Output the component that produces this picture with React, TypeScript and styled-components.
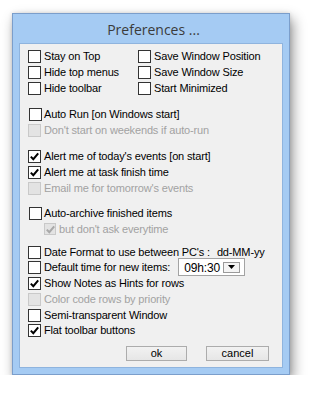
import React from "react";
import styled, { createGlobalStyle } from "styled-components";

const GlobalStyle = createGlobalStyle`
  html, body { margin: 0; padding: 0; background: #ffffff; }
  body { font-family: "Liberation Sans", Arial, sans-serif; font-size: 11px; letter-spacing: -0.15px; color: #000; }
`;

const Window = styled.div`
  box-sizing: border-box;
  margin: 13px 0 0 12px;
  width: 278px;
  height: 362px;
  border: 1px solid #7b9ecb;
  background: #a5cbf3;
  box-shadow: 3px 6px 12px rgba(0, 0, 0, 0.42), 0 0 4px rgba(0, 0, 0, 0.12);
  padding: 0 6px 6px 6px;
  display: flex;
  flex-direction: column;
`;

const TitleBar = styled.div`
  height: 28px;
  display: flex;
  align-items: center;
  justify-content: center;
  font-family: "Open Sans", "Noto Sans", sans-serif;
  font-size: 14px;
  letter-spacing: 0;
  color: #3b3b3b;
  padding-left: 5px;
  padding-top: 1px;
`;

const Panel = styled.div`
  flex: 1;
  background: #f0f0f0;
  border: 1px solid #8fb4de;
  padding: 5px 8px 6px 8px;
  display: flex;
  flex-direction: column;
`;

const Group = styled.div<{ $mt: number }>`
  margin-top: ${(p) => p.$mt}px;
  display: flex;
  flex-direction: column;
`;

const TwoCol = styled.div`
  display: grid;
  grid-template-columns: 110px auto;
  grid-auto-rows: 16px;
`;

const Row = styled.div<{ $h?: number; $indent?: number }>`
  height: ${(p) => p.$h ?? 16}px;
  display: flex;
  align-items: flex-start;
  padding-left: ${(p) => p.$indent ?? 0}px;
  white-space: nowrap;
`;

const Box = styled.span<{ $disabled?: boolean; $small?: boolean; $shift?: number }>`
  box-sizing: border-box;
  width: ${(p) => (p.$small ? 12 : 13)}px;
  height: ${(p) => (p.$small ? 12 : 13)}px;
  margin-top: 1px;
  margin-left: ${(p) => p.$shift ?? 0}px;
  margin-right: ${(p) => 3 - (p.$shift ?? 0)}px;
  border: 1px solid ${(p) => (p.$disabled ? "#c9c9c9" : "#333333")};
  background: ${(p) => (p.$disabled ? "#e3e3e3" : "#ffffff")};
  display: flex;
  align-items: center;
  justify-content: center;
  flex: none;
`;

const Label = styled.span<{ $disabled?: boolean }>`
  line-height: 15px;
  color: ${(p) => (p.$disabled ? "#a2a2a2" : "#000000")};
`;

const Value = styled.span`
  margin-left: 7px;
  line-height: 15px;
`;

const Combo = styled.div`
  box-sizing: border-box;
  margin-left: 8px;
  margin-top: -2px;
  width: 67px;
  height: 18px;
  border: 1px solid #a3a3a3;
  background: #ffffff;
  display: flex;
  align-items: center;
  padding-left: 5px;
`;

const ComboText = styled.span`
  flex: 1;
  font-size: 12px;
  line-height: 16px;
  padding-top: 2px;
`;

const ComboButton = styled.span`
  box-sizing: border-box;
  width: 17px;
  height: 11px;
  margin-right: 4px;
  border: 1px solid #9a9a9a;
  background: #f4f4f4;
  display: flex;
  align-items: center;
  justify-content: center;
`;

const ButtonRow = styled.div`
  margin-top: 7px;
  margin-right: 5px;
  display: flex;
  justify-content: flex-end;
  gap: 19px;
`;

const Button = styled.button<{ $w: number }>`
  box-sizing: border-box;
  width: ${(p) => p.$w}px;
  height: 15px;
  padding: 0;
  border: 1px solid #acacac;
  background: linear-gradient(#f2f2f2, #e6e6e6);
  font-family: "Liberation Sans", Arial, sans-serif;
  font-size: 11px;
  line-height: 13px;
  color: #000;
`;

const Check = ({ color }: { color: string }) => (
  <svg width="9" height="9" viewBox="0 0 9 9">
    <path d="M0.8 4.6 L3.3 7.2 L8.2 1.3" fill="none" stroke={color} strokeWidth="2" />
  </svg>
);

type CBProps = {
  label: React.ReactNode;
  checked?: boolean;
  disabled?: boolean;
  small?: boolean;
  shift?: number;
};

const CheckItem = ({ label, checked, disabled, small, shift }: CBProps) => (
  <>
    <Box $disabled={disabled} $small={small} $shift={shift}>
      {checked && <Check color={disabled ? "#a8a8a8" : "#000"} />}
    </Box>
    <Label $disabled={disabled}>{label}</Label>
  </>
);

export default function App() {
  return (
    <>
      <GlobalStyle />
      <Window>
        <TitleBar>Preferences ...</TitleBar>
        <Panel>
          <TwoCol>
            <Row><CheckItem label="Stay on Top" /></Row>
            <Row><CheckItem label="Save Window Position" /></Row>
            <Row><CheckItem label="Hide top menus" /></Row>
            <Row><CheckItem label="Save Window Size" /></Row>
            <Row><CheckItem label="Hide toolbar" /></Row>
            <Row><CheckItem label="Start Minimized" /></Row>
          </TwoCol>
          <Group $mt={10}>
            <Row><CheckItem label="Auto Run [on Windows start]" shift={1} /></Row>
            <Row><CheckItem label="Don't start on weekends if auto-run" disabled /></Row>
          </Group>
          <Group $mt={10}>
            <Row><CheckItem label="Alert me of today's events [on start]" checked /></Row>
            <Row><CheckItem label="Alert me at task finish time" checked /></Row>
            <Row><CheckItem label="Email me for tomorrow's events" disabled /></Row>
          </Group>
          <Group $mt={9}>
            <Row><CheckItem label="Auto-archive finished items" shift={1} /></Row>
            <Row $h={13} $indent={16}>
              <CheckItem label="but don't ask everytime" checked disabled small />
            </Row>
          </Group>
          <Group $mt={10}>
            <Row $h={15}>
              <CheckItem label="Date Format to use between PC's :" />
              <Value>dd-MM-yy</Value>
            </Row>
            <Row>
              <CheckItem label="Default time for new items:" />
              <Combo>
                <ComboText>09h:30</ComboText>
                <ComboButton>
                  <svg width="7" height="4" viewBox="0 0 7 4">
                    <path d="M0 0 H7 L3.5 4 Z" fill="#000" />
                  </svg>
                </ComboButton>
              </Combo>
            </Row>
            <Row><CheckItem label="Show Notes as Hints for rows" checked /></Row>
            <Row><CheckItem label="Color code rows by priority" disabled /></Row>
            <Row $h={15}><CheckItem label="Semi-transparent Window" /></Row>
            <Row><CheckItem label="Flat toolbar buttons" checked /></Row>
          </Group>
          <ButtonRow>
            <Button $w={61}>ok</Button>
            <Button $w={63}>cancel</Button>
          </ButtonRow>
        </Panel>
      </Window>
    </>
  );
}
